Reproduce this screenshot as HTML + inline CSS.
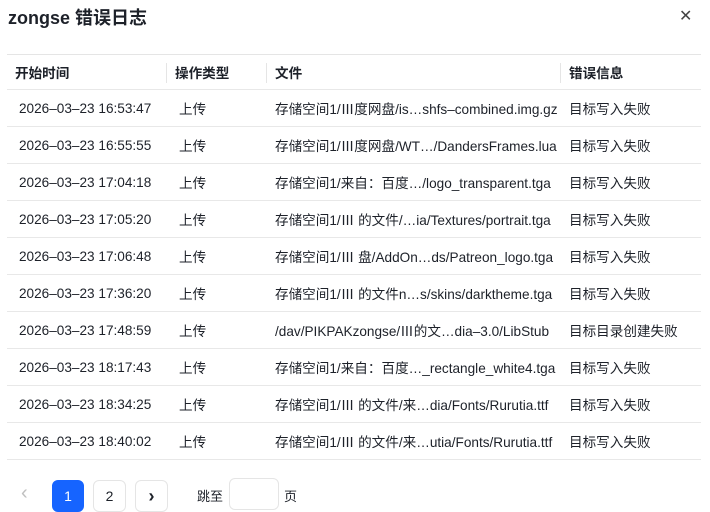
<!DOCTYPE html>
<html><head><meta charset="utf-8"><style>
body{margin:0;width:710px;height:501px;overflow:hidden;background:#fff;font-family:"Liberation Sans","Noto Sans CJK SC",sans-serif;color:#1d2129;position:relative}
.t{position:absolute;left:8px;top:4px;font-size:18px;font-weight:bold;color:#1d2129}
.x{position:absolute;left:679px;top:6px;font-size:16px;color:#444}
table{position:absolute;left:7px;top:54px;width:694px;border-collapse:collapse;font-size:13.6px;table-layout:fixed}
td,th{height:36px;border-bottom:1px solid #e8e8e8;text-align:left;padding:0;white-space:nowrap;overflow:hidden}
th{height:34px;font-weight:bold;border-top:1px solid #e5e5e5;position:relative;padding-left:8px;overflow:visible}
th+th:before{content:"";position:absolute;left:-1px;top:8px;height:20px;border-left:1px solid #e5e5e5}
td{padding-left:8px}
td.d{padding-left:12px}
td.o{padding-left:12px}
.pg{position:absolute;top:480px;height:32px;border:1px solid #e5e5e5;border-radius:6px;box-sizing:border-box;font-size:14px;text-align:center;line-height:30px}
</style></head><body>
<div class="t">zongse 错误日志</div>
<div class="x">✕</div>
<table>
<colgroup><col style="width:160px"><col style="width:100px"><col style="width:294px"><col style="width:140px"></colgroup>
<tr><th>开始时间</th><th>操作类型</th><th>文件</th><th>错误信息</th></tr>
<tr><td class="d">2026–03–23 16:53:47</td><td class="o">上传</td><td>存储空间1/Ⅲ度网盘/is…shfs–combined.img.gz</td><td>目标写入失败</td></tr>
<tr><td class="d">2026–03–23 16:55:55</td><td class="o">上传</td><td>存储空间1/Ⅲ度网盘/WT…/DandersFrames.lua</td><td>目标写入失败</td></tr>
<tr><td class="d">2026–03–23 17:04:18</td><td class="o">上传</td><td>存储空间1/来自：百度…/logo_transparent.tga</td><td>目标写入失败</td></tr>
<tr><td class="d">2026–03–23 17:05:20</td><td class="o">上传</td><td>存储空间1/Ⅲ 的文件/…ia/Textures/portrait.tga</td><td>目标写入失败</td></tr>
<tr><td class="d">2026–03–23 17:06:48</td><td class="o">上传</td><td>存储空间1/Ⅲ 盘/AddOn…ds/Patreon_logo.tga</td><td>目标写入失败</td></tr>
<tr><td class="d">2026–03–23 17:36:20</td><td class="o">上传</td><td>存储空间1/Ⅲ 的文件n…s/skins/darktheme.tga</td><td>目标写入失败</td></tr>
<tr><td class="d">2026–03–23 17:48:59</td><td class="o">上传</td><td>/dav/PIKPAKzongse/Ⅲ的文…dia–3.0/LibStub</td><td>目标目录创建失败</td></tr>
<tr><td class="d">2026–03–23 18:17:43</td><td class="o">上传</td><td>存储空间1/来自：百度…_rectangle_white4.tga</td><td>目标写入失败</td></tr>
<tr><td class="d">2026–03–23 18:34:25</td><td class="o">上传</td><td>存储空间1/Ⅲ 的文件/来…dia/Fonts/Rurutia.ttf</td><td>目标写入失败</td></tr>
<tr><td class="d">2026–03–23 18:40:02</td><td class="o">上传</td><td>存储空间1/Ⅲ 的文件/来…utia/Fonts/Rurutia.ttf</td><td>目标写入失败</td></tr>
</table>
<div style="position:absolute;left:21px;top:482px;font-size:20px;color:#c0c0c0">‹</div>
<div class="pg" style="left:52px;width:32px;background:#1664ff;border-color:#1664ff;color:#fff">1</div>
<div class="pg" style="left:93px;width:33px">2</div>
<div class="pg" style="left:135px;width:33px;font-weight:bold;font-size:18px">›</div>
<div style="position:absolute;left:197px;top:486px;font-size:13px">跳至</div>
<div class="pg" style="left:229px;width:50px;top:478px"></div>
<div style="position:absolute;left:284px;top:486px;font-size:13px">页</div>
</body></html>
